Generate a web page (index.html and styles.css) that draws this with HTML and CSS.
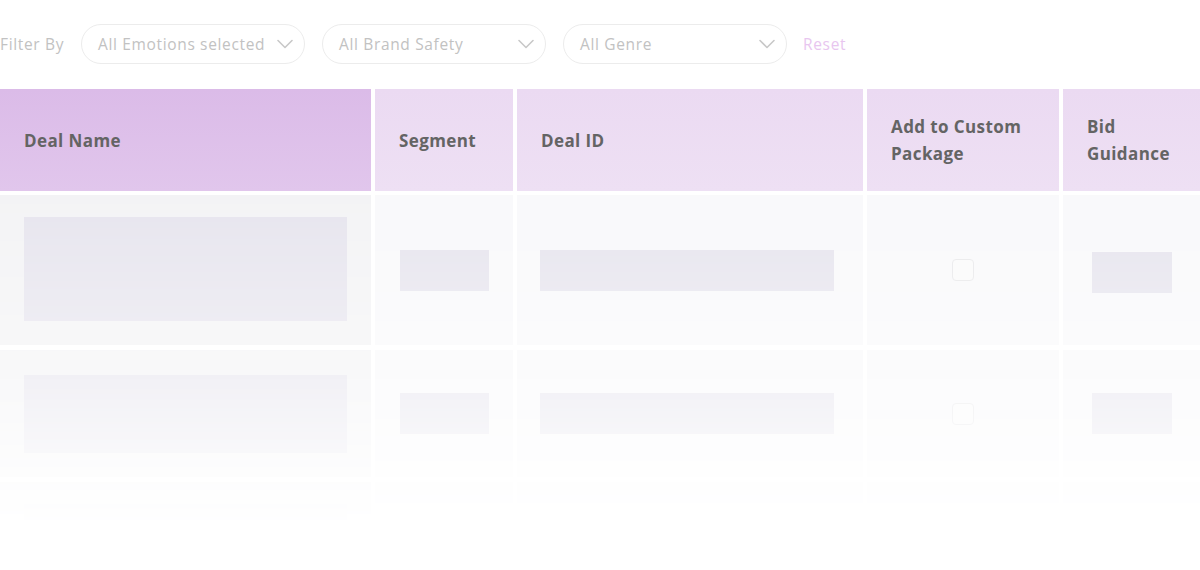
FILE: index.html
```html
<!DOCTYPE html>
<html lang="en">
<head>
  <meta charset="UTF-8" />
  <meta name="viewport" content="width=device-width, initial-scale=1.0"/>
  <title>Deals</title>
  <link rel="stylesheet" href="styles.css">
</head>
<body>

<div class="filters">
  <span class="filter-label">Filter By</span>
  <div class="select">
    <span>All Emotions selected</span>
    <svg class="chevron" viewBox="0 0 16 10" width="16" height="10"><path d="M1 1.5 L8 8.5 L15 1.5" /></svg>
  </div>
  <div class="select">
    <span>All Brand Safety</span>
    <svg class="chevron" viewBox="0 0 16 10" width="16" height="10"><path d="M1 1.5 L8 8.5 L15 1.5" /></svg>
  </div>
  <div class="select">
    <span>All Genre</span>
    <svg class="chevron" viewBox="0 0 16 10" width="16" height="10"><path d="M1 1.5 L8 8.5 L15 1.5" /></svg>
  </div>
  <a class="reset" href="#">Reset</a>
</div>

<div class="deal-table">
  <div class="head-row">
    <div class="th active">Deal Name</div>
    <div class="th">Segment</div>
    <div class="th">Deal ID</div>
    <div class="th">Add to Custom Package</div>
    <div class="th bid">Bid Guidance</div>
  </div>

  <div class="body-rows">
    <div class="row row-tall">
      <div class="td active"><div class="sk sk-name"></div></div>
      <div class="td"><div class="sk sk-segment"></div></div>
      <div class="td"><div class="sk sk-id"></div></div>
      <div class="td center"><div class="checkbox"></div></div>
      <div class="td"><div class="sk sk-bid"></div></div>
    </div>
    <div class="row">
      <div class="td active"><div class="sk sk-name"></div></div>
      <div class="td"><div class="sk sk-segment"></div></div>
      <div class="td"><div class="sk sk-id"></div></div>
      <div class="td center"><div class="checkbox"></div></div>
      <div class="td"><div class="sk sk-bid"></div></div>
    </div>
    <div class="row row-last">
      <div class="td active"><div class="sk sk-name"></div></div>
      <div class="td"></div>
      <div class="td"></div>
      <div class="td"></div>
      <div class="td"></div>
    </div>
  </div>
</div>

</body>
</html>
```

FILE: styles.css
```css
body {
  margin: 0;
  font-family: 'Open Sans', 'Lato', sans-serif;
  background-color: #fff;
}

/* filter bar */
.filters {
  display: flex;
  align-items: center;
  height: 40px;
  margin-top: 24px;
  gap: 17px;
  font-size: 15.5px;
  letter-spacing: 0.65px;
}

.filter-label {
  color: #c2c2c2;
}

.select {
  display: flex;
  align-items: center;
  justify-content: space-between;
  box-sizing: border-box;
  width: 224px;
  height: 40px;
  padding: 0 11px 0 16px;
  border: 1px solid #ececec;
  border-radius: 20px;
  color: #c2c2c2;
}

.chevron path {
  fill: none;
  stroke: #c8c8c8;
  stroke-width: 1.6;
  stroke-linecap: round;
  stroke-linejoin: round;
}

.reset {
  margin-left: -1px;
  color: #e8c6ef;
  text-decoration: none;
}

/* table */
.deal-table {
  margin-top: 25px;
  overflow: hidden;
}

.head-row,
.row {
  display: grid;
  grid-template-columns: 371px 138px 346px 192px 137px;
  column-gap: 4px;
}

.head-row {
  height: 102px;
  margin-bottom: 4px;
}

.th {
  display: flex;
  align-items: center;
  padding: 0 20px 0 24px;
  background: linear-gradient(to bottom, #ebdaf2, #eee0f4);
  color: #646464;
  font-size: 17px;
  font-weight: 700;
  letter-spacing: 0.4px;
  line-height: 27px;
}

.th.active {
  background: linear-gradient(to bottom, #dbbbe8, #e1c6ec);
}

.body-rows {
  display: flex;
  flex-direction: column;
  gap: 5px;
  -webkit-mask-image: linear-gradient(to bottom, rgba(0,0,0,0.9) 0, rgba(0,0,0,0.55) 170px, rgba(0,0,0,0.2) 270px, transparent 330px);
  mask-image: linear-gradient(to bottom, rgba(0,0,0,0.9) 0, rgba(0,0,0,0.55) 170px, rgba(0,0,0,0.2) 270px, transparent 330px);
}

.row {
  height: 127px;
}

.row-tall {
  height: 150px;
}

.row-last {
  height: 60px;
}

.td {
  display: flex;
  align-items: center;
  background: #f8f8fa;
}

.td.active {
  background: #f2f2f4;
}

.td.center {
  justify-content: center;
}

.sk {
  background: #e4e2ec;
}

.sk-name {
  width: 323px;
  height: 78px;
  margin-left: 24px;
}

.row-tall .sk-name {
  height: 104px;
  margin-top: -2px;
}

.row-last .sk-name {
  align-self: flex-start;
  margin-top: 22px;
}

.sk-segment {
  width: 89px;
  height: 41px;
  margin-left: 25px;
}

.sk-id {
  width: 294px;
  height: 41px;
  margin-left: 23px;
}

.sk-bid {
  width: 80px;
  height: 41px;
  margin-left: 29px;
}

.row-tall .sk-bid {
  margin-top: 4px;
}

.checkbox {
  width: 20px;
  height: 20px;
  border: 1.5px solid #e6e6e8;
  border-radius: 4px;
  background: #fafafa;
}
```
